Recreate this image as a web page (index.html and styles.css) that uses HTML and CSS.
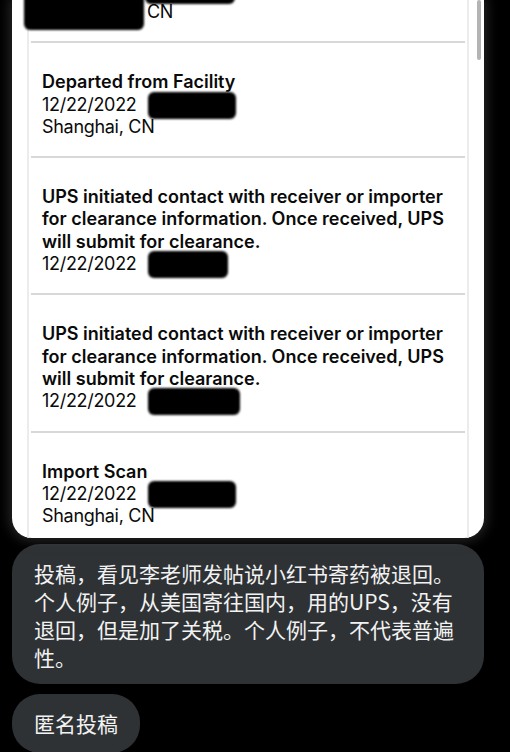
FILE: index.html
```html
<!DOCTYPE html>
<html lang="zh">
<head>
<meta charset="utf-8">
<title>UPS tracking post</title>
<link rel="stylesheet" href="styles.css">
</head>
<body>
<div class="page">
  <div class="card">
    <div class="scrollbar"></div>
    <ul class="events">
      <li class="event event-partial">
        <span class="redact redact-a"></span>
        <span class="redact redact-b"></span>
        <div class="line cut-line">CN</div>
      </li>
      <li class="event">
        <div class="title">Departed from Facility</div>
        <div class="line">12/22/2022<span class="redact rd1"></span></div>
        <div class="line">Shanghai, CN</div>
      </li>
      <li class="event">
        <div class="title">UPS initiated contact with receiver or importer for clearance information. Once received, UPS will submit for clearance.</div>
        <div class="line">12/22/2022<span class="redact rd2"></span></div>
      </li>
      <li class="event">
        <div class="title">UPS initiated contact with receiver or importer for clearance information. Once received, UPS will submit for clearance.</div>
        <div class="line">12/22/2022<span class="redact rd3"></span></div>
      </li>
      <li class="event event-last">
        <div class="title">Import Scan</div>
        <div class="line">12/22/2022<span class="redact rd4"></span></div>
        <div class="line">Shanghai, CN</div>
      </li>
    </ul>
  </div>
  <div class="bubble">投稿，看见李老师发帖说小红书寄药被退回。个人例子，从美国寄往国内，用的UPS，没有退回，但是加了关税。个人例子，不代表普遍性。</div>
  <div class="bubble bubble-short">匿名投稿</div>
</div>
</body>
</html>
```

FILE: styles.css
```css
html, body {
  margin: 0;
  padding: 0;
  background: #000;
  height: 100%;
  overflow: hidden;
}

.page {
  width: 472px;
  margin-left: 12px;
  display: flex;
  flex-direction: column;
  align-items: flex-start;
}

.card {
  position: relative;
  width: 472px;
  box-sizing: border-box;
  background: #fff;
  border-radius: 0 0 20px 20px;
  padding: 0 15px;
  box-shadow: 0 0 12px 3px rgba(70, 70, 70, 0.55);
  overflow: hidden;
  font-family: "Inter", "Liberation Sans", sans-serif;
  font-size: 18px;
  line-height: 22.3px;
  color: #0a0a0a;
  letter-spacing: 0;
}

.scrollbar {
  position: absolute;
  left: 465px;
  top: 0;
  width: 4px;
  height: 60px;
  border-radius: 2px;
  background: #b4b4b4;
}

.events {
  list-style: none;
  margin: 0;
  padding: 0 2px;
  border-left: 2px solid #ececec;
  border-right: 2px solid #ececec;
}

.event {
  position: relative;
  padding: 28px 11px 18px;
  border-top: 2px solid #d8d8d8;
}

.event-partial {
  border-top: none;
  padding-top: 1px;
  padding-bottom: 18px;
}

.event-last {
  padding-bottom: 11px;
}

.title {
  font-weight: 600;
}

.line {
  letter-spacing: -0.3px;
}

.cut-line {
  padding-left: 105px;
}

.redact {
  display: inline-block;
  background: #000;
  border-radius: 6px;
  filter: blur(0.8px);
  height: 27px;
  margin: -3px 0 -5px 11px;
  vertical-align: -3px;
}

.redact-a,
.redact-b {
  position: absolute;
  margin: 0;
}

.redact-a {
  left: -7px;
  top: -12px;
  width: 120px;
  height: 42px;
}

.redact-b {
  left: 114px;
  top: -20px;
  width: 90px;
  height: 24px;
}

.rd1 { width: 88px; }
.rd2 { width: 80px; }
.rd3 { width: 92px; }
.rd4 { width: 88px; }

.bubble {
  box-sizing: border-box;
  width: 472px;
  background: #2f3235;
  color: #f2f2f2;
  border-radius: 28px;
  padding: 15px 22px 13px;
  font-family: "Noto Sans CJK SC", "Noto Sans", sans-serif;
  font-size: 21px;
  line-height: 28px;
  margin-top: 6px;
}

.bubble-short {
  width: auto;
  margin-top: 10px;
  padding-bottom: 16px;
}
```
